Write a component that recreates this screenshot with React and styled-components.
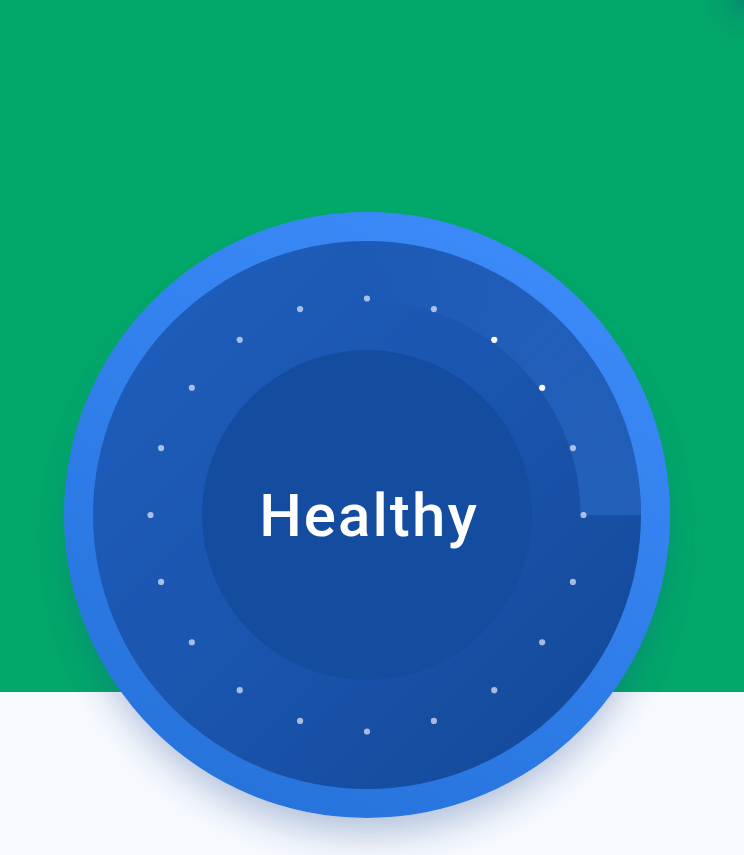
import React from "react";
import styled, { createGlobalStyle } from "styled-components";

const GlobalStyle = createGlobalStyle`
  html, body {
    margin: 0;
    padding: 0;
  }
  body {
    font-family: "Liberation Sans", Arial, sans-serif;
    background: #f6f9fe;
  }
`;

const Page = styled.div`
  position: relative;
  width: 744px;
  height: 855px;
  overflow: hidden;
  background:
    radial-gradient(circle at 100% 0, rgba(10, 120, 110, 0.55) 0, rgba(10, 130, 110, 0.2) 22px, rgba(2, 167, 106, 0) 45px),
    linear-gradient(to bottom, #02a76a 0, #02a76a 692px, #f6f9fe 692px);
  padding: 212px 0 0 64px;
  box-sizing: border-box;
`;

const Dial = styled.div`
  position: relative;
  width: 606px;
  height: 606px;
  border-radius: 50%;
  background: linear-gradient(205deg, #408dfd 0%, #3180ec 45%, #2470d8 100%);
  box-shadow: 0 24px 34px -8px rgba(30, 70, 140, 0.3);
  display: flex;
  align-items: center;
  justify-content: center;
`;

const Face = styled.div`
  position: relative;
  width: 548px;
  height: 548px;
  border-radius: 50%;
  background: linear-gradient(135deg, #1f5fbe 0%, #1a55ae 50%, #124796 100%);
  display: flex;
  align-items: center;
  justify-content: center;
`;

const Arc = styled.div`
  position: absolute;
  inset: 0;
  border-radius: 50%;
  background: conic-gradient(
    from 0deg,
    rgba(60, 130, 230, 0.02) 0deg,
    rgba(60, 130, 230, 0.2) 40deg,
    rgba(60, 130, 230, 0.34) 90deg,
    transparent 90deg
  );
  -webkit-mask: radial-gradient(circle, transparent 213px, #000 214px);
  mask: radial-gradient(circle, transparent 213px, #000 214px);
`;

const Core = styled.div`
  position: relative;
  width: 330px;
  height: 330px;
  border-radius: 50%;
  background: #144ca0;
  display: flex;
  align-items: center;
  justify-content: center;
`;

const Label = styled.span`
  color: #ffffff;
  font-family: Roboto, "Liberation Sans", Arial, sans-serif;
  font-size: 60px;
  letter-spacing: 2.1px;
  font-weight: 500;
  margin-top: 1px;
  margin-left: 4px;
`;

const Ticks = styled.svg`
  position: absolute;
  inset: 0;
  width: 548px;
  height: 548px;
`;

const TICK_COUNT = 20;
const BRIGHT = [2, 3];

const TickRing = () => {
  const dots = [];
  for (let i = 0; i < TICK_COUNT; i++) {
    const a = (i * 2 * Math.PI) / TICK_COUNT;
    const x = 274 + 216.5 * Math.sin(a);
    const y = 274 - 216.5 * Math.cos(a);
    const bright = BRIGHT.includes(i);
    dots.push(
      <circle
        key={i}
        cx={x}
        cy={y}
        r={3.1}
        fill="#ffffff"
        fillOpacity={bright ? 1 : 0.62}
      />
    );
  }
  return <Ticks viewBox="0 0 548 548">{dots}</Ticks>;
};

const App = () => {
  return (
    <>
      <GlobalStyle />
      <Page>
        <Dial>
          <Face>
            <Arc />
            <TickRing />
            <Core>
              <Label>Healthy</Label>
            </Core>
          </Face>
        </Dial>
      </Page>
    </>
  );
};

export default App;
